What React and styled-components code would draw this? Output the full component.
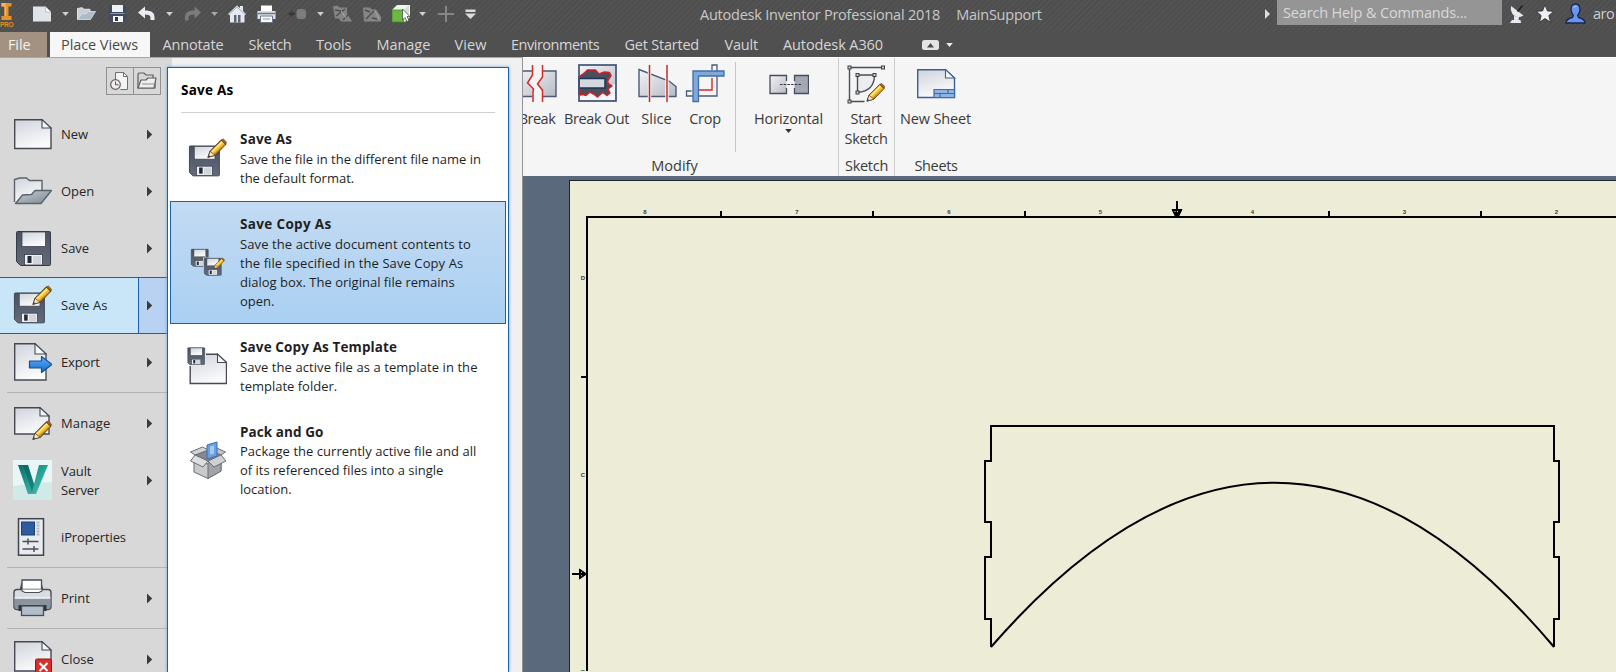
import React from "react";
import styled, { createGlobalStyle, css } from "styled-components";

const Global = createGlobalStyle`
  * { box-sizing: border-box; }
  body {
    margin: 0;
    overflow: hidden;
    background: #edecd7;
    font-family: "Open Sans", "Noto Sans", sans-serif;
  }
`;

/* ---------- layout ---------- */

const Window = styled.div`
  display: flex;
  flex-direction: column;
  width: 1616px;
  height: 672px;
  overflow: hidden;
`;

const TopBar = styled.header`
  flex: none;
  display: flex;
  flex-direction: column;
  height: 57px;
  background: #505050;
  color: #d6d6d6;
  font-size: 14.5px;
`;

const TitleRow = styled.div`
  display: flex;
  height: 32px;
  background: repeating-linear-gradient(135deg, #4e4e4e 0 2px, #535353 2px 4px);
`;

const QuickAccess = styled.div`
  flex: none;
  display: flex;
  align-items: center;
  width: 700px;
  height: 27px;
`;

const QuickSlot = styled.span`
  flex: none;
  display: flex;
  margin-left: ${(p) => p.$gap}px;
`;

const Text = styled.span`
  white-space: nowrap;
  letter-spacing: ${(p) => p.$ls || 0}px;
`;

const TitleText = styled.div`
  display: flex;
  gap: 16px;
  height: 29px;
  line-height: 29px;
  color: #c9c9c9;
`;

const InfoCenter = styled.div`
  display: flex;
  align-items: center;
  width: 351px;
  height: 27px;
  margin-left: auto;
`;

const SearchBox = styled.div`
  flex: none;
  width: 225px;
  height: 25px;
  margin: 0 7px 2px;
  padding-left: 6px;
  line-height: 25px;
  background: #959595;
  color: #d9d9d9;
`;

const UserName = styled.span`
  margin-left: 7px;
  color: #cfcfcf;
  letter-spacing: -0.5px;
`;

const TabRow = styled.nav`
  display: flex;
  height: 25px;
  line-height: 25px;
`;

const Tab = styled.div`
  flex: none;
  width: ${(p) => p.$w}px;
  padding-left: ${(p) => (p.$kind ? 0 : 12.5)}px;
  white-space: nowrap;
  letter-spacing: ${(p) => p.$ls}px;
  ${(p) => p.$kind === "file" && css`
    margin-right: 3px;
    padding-left: 8px;
    background: #a39282;
    color: #f4f1ee;
  `}
  ${(p) => p.$kind === "active" && css`
    padding-left: 11px;
    background: #f7f7f7;
    color: #4b4b4b;
  `}
`;

const RibbonToggle = styled.div`
  display: flex;
  align-items: center;
  gap: 7px;
  margin-left: 38px;
`;

const Body = styled.div`
  flex: 1;
  display: flex;
  min-height: 0;
`;

/* ---------- application menu ---------- */

const AppMenu = styled.aside`
  flex: none;
  display: flex;
  width: 523px;
  border-top: 1px solid #a6a6a6;
  border-right: 1px solid #939393;
  background: linear-gradient(90deg, #d8d8d8 172px, #f0f0f0 172px);
`;

const MenuColumn = styled.div`
  flex: none;
  width: 167px;
  padding-top: 9px;
`;

const DocButtons = styled.div`
  display: flex;
  width: 55px;
  height: 28px;
  margin: 0 0 11px 106px;
  border: 1px solid #909090;
`;

const DocButton = styled.div`
  flex: 1;
  display: flex;
  align-items: center;
  justify-content: center;
  & + & { border-left: 1px solid #909090; }
`;

const MenuRow = styled.div`
  display: flex;
  align-items: center;
  height: 57px;
  padding-left: 12px;
  border: solid transparent;
  border-width: 1px 0;
  font-size: 13px;
  line-height: 19px;
  color: #262626;
  & > svg:first-child { margin-bottom: 2px; }
  ${(p) => p.$active && css`
    border-color: #1c5faf;
    background: linear-gradient(90deg, #c8e6f8 138px, #1c5faf 138px 139px, #b9d2f1 139px);
  `}
`;

const MenuLabel = styled.span`
  width: 76px;
  margin: 0 10px 0 9px;
  white-space: pre-line;
  letter-spacing: ${(p) => p.$ls || 0}px;
`;

const MenuRule = styled.div`
  height: 4px;
  margin-left: 7px;
  background: linear-gradient(transparent 1px, #b2b2b2 1px 2px, transparent 2px);
`;

const Flyout = styled.section`
  flex: none;
  width: 342px;
  margin-top: 9px;
  padding: 0 2px;
  border: 1px solid #1c62a8;
  border-bottom: 0;
  background: #fff;
  box-shadow: 0 0 3px #62a4dd;
`;

const FlyoutTitle = styled.h2`
  height: 45px;
  margin: 0 11px 3px 11px;
  border-bottom: 1px solid #d0d0d0;
  font-size: 13.5px;
  font-weight: 700;
  line-height: 45px;
  letter-spacing: 0.25px;
  color: #000;
`;

const FlyoutItem = styled.div`
  display: flex;
  align-items: center;
  padding: 13px 0 12px 16px;
  border: 1px solid ${(p) => (p.$active ? "#1c62a8" : "transparent")};
  background: ${(p) => (p.$active ? "linear-gradient(#c3daf2, #aad0f2)" : "none")};
  color: #1f1f1f;
  font-size: 13px;
  line-height: 19px;
  & > svg { margin-bottom: 2px; }
`;

const ItemBody = styled.div`
  display: flex;
  flex-direction: column;
  margin-left: 13px;
`;

const ItemTitle = styled.strong`
  margin-bottom: ${(p) => (p.$tight ? 0 : 1)}px;
  font-size: 13.5px;
  letter-spacing: ${(p) => p.$ls}px;
`;

/* ---------- ribbon ---------- */

const Main = styled.main`
  flex: 1;
  display: flex;
  flex-direction: column;
  min-width: 0;
`;

const Ribbon = styled.div`
  flex: none;
  display: flex;
  height: 119px;
  overflow: hidden;
  border-top: 1px solid #fff;
  background: #f5f5f5;
  color: #3a3a3a;
  font-size: 14.5px;
`;

const RibbonGroup = styled.div`
  flex: none;
  display: flex;
  flex-direction: column;
  width: ${(p) => p.$w}px;
  margin-left: ${(p) => p.$shift || 0}px;
  border-right: ${(p) => (p.$last ? 0 : "1px solid #cccccc")};
`;

const GroupTools = styled.div`
  display: flex;
  height: 98px;
  padding-top: 6px;
`;

const GroupName = styled.div`
  height: 20px;
  padding-right: ${(p) => p.$pad || 0}px;
  line-height: 20px;
  text-align: center;
  letter-spacing: ${(p) => p.$ls || 0}px;
`;

const Tool = styled.div`
  flex: none;
  display: flex;
  flex-direction: column;
  align-items: center;
  width: ${(p) => p.$w}px;
  line-height: 20px;
  letter-spacing: ${(p) => p.$ls || 0}px;
  white-space: pre;
  text-align: center;
  & > svg:first-child { margin-bottom: 5px; }
`;

const ToolRule = styled.div`
  flex: none;
  width: 1px;
  height: 90px;
  margin: -2px 2px 0 4px;
  background: #c6c6c6;
`;

const Canvas = styled.div`
  flex: 1;
  padding: 4px 0 0 46px;
  background: #5a697c;
`;

const Sheet = styled.div`
  height: 100%;
  border: solid #20242c;
  border-width: 1px 0 0 1px;
  background: #edecd7;
  svg { display: block; }
`;

/* ---------- shared icon pieces ---------- */

const Defs = styled.svg`
  position: absolute;
`;

const Gradients = () => (
  <Defs width="0" height="0">
    <defs>
      <linearGradient id="paper" x1="0" y1="0" x2="0.4" y2="1">
        <stop offset="0" stopColor="#cfd4dc" /><stop offset="1" stopColor="#fafafa" />
      </linearGradient>
      <linearGradient id="steel" x1="0" y1="0" x2="1" y2="1">
        <stop offset="0" stopColor="#f4f4f5" /><stop offset="1" stopColor="#b5bac5" />
      </linearGradient>
      <linearGradient id="flap" x1="0" y1="0" x2="1" y2="1">
        <stop offset="0" stopColor="#c5ccd3" /><stop offset="1" stopColor="#7f8a94" />
      </linearGradient>
      <linearGradient id="disk" x1="0" y1="0" x2="0" y2="1">
        <stop offset="0" stopColor="#4b515f" /><stop offset="1" stopColor="#636b7a" />
      </linearGradient>
      <linearGradient id="teal" x1="0" y1="0" x2="1" y2="1">
        <stop offset="0" stopColor="#0c6a67" /><stop offset="0.5" stopColor="#27a196" /><stop offset="1" stopColor="#57bfb0" />
      </linearGradient>
      <linearGradient id="arrow" x1="0" y1="0" x2="0" y2="1">
        <stop offset="0" stopColor="#59b4ff" /><stop offset="1" stopColor="#1766c8" />
      </linearGradient>
    </defs>
  </Defs>
);

const Icon = ({ w = 40, h = 40, children }) => (
  <svg width={w} height={h} viewBox={`0 0 ${w} ${h}`} fill="none">{children}</svg>
);

const Caret = ({ fill = "#d0d0d0" }) => (
  <Icon w={7} h={4}><path d="M.2 0h6.600L3.500 4z" fill={fill} /></Icon>
);

const RightMark = () => (
  <Icon w={6} h={11}><path d="M0 .5v10l5.200-5z" fill="#3a3a3a" /></Icon>
);

const Pencil = ({ x = 0, y = 0, k = 1 }) => (
  <g transform={`translate(${x} ${y}) scale(${k})`}>
    <path d="M0 18l2-6L13 1l4.500 4L7 16z" fill="#f3c22f" stroke="#4b3a22" strokeWidth="1" strokeLinejoin="round" />
    <path d="M3.500 13L14 2.500" stroke="#ffe98a" strokeWidth="1.600" />
    <path d="M6 15.300L16.500 5.300" stroke="#c5851d" strokeWidth="1.400" />
    <path d="M13 1l2-1 3 3-.5 2z" fill="#a5692b" stroke="#6d4822" strokeWidth=".8" />
    <path d="M0 18l2-6 5 4z" fill="#f5e3c4" stroke="#4b3a22" strokeWidth=".7" />
    <path d="M0 18l.8-2.200 1.500 1.300z" fill="#333" />
  </g>
);

const Disk = ({ x = 0, y = 0, k = 1 }) => (
  <g transform={`translate(${x} ${y}) scale(${k})`}>
    <path d="M.5 1.500q0-1 1-1h32q1 0 1 1v32q0 1-1 1H4.500l-4-4z" fill="url(#disk)" stroke="#353b48" />
    <rect x="6" y="1" width="23.500" height="14.500" fill="url(#paper)" stroke="#3e4553" strokeWidth=".8" />
    <rect x="8.500" y="23.500" width="18" height="10.500" fill="#eef0f2" stroke="#333b47" strokeWidth=".8" />
    <rect x="11.500" y="25" width="4" height="7" fill="#222a38" />
    <rect x="17" y="25" width="8" height="8" fill="#d2d6dc" />
  </g>
);

const Page = ({ x, y, w, h, c = "#454a55", fold = 9 }) => (
  <g transform={`translate(${x} ${y})`}>
    <path d={`M.7.7H${w - fold}L${w} ${fold}V${h}H.7z`} fill="url(#paper)" stroke={c} strokeWidth="1.400" />
    <path d={`M${w - fold} .7V${fold}H${w}z`} fill="#f7f8fa" stroke={c} strokeWidth="1.100" />
  </g>
);

/* ---------- quick access icons ---------- */

const LogoText = styled.text`
  font: 700 6.5px "Liberation Sans", sans-serif;
  fill: #e38d23;
`;

const quickItems = [
  [0, <Icon w={14} h={27}><path d="M1.500 3h10v3.500h-3v9.500h3v4h-10v-4h3V6.500h-3z" fill="#e8922b" /><path d="M1.500 3h4v3.500h-4zM4.500 6.500h1.700V16H4.500z" fill="#f7b65b" /><LogoText x="0" y="27" textLength="13.500">PRO</LogoText></Icon>],
  [19, <Icon w={18} h={16}><path d="M0 .5h12.500L18 6v9.500H0z" fill="#dfe4ea" /><path d="M12.500.5V6H18z" fill="#fff" stroke="#9aa2ac" strokeWidth=".6" /></Icon>],
  [11, <Caret />],
  [8, <Icon w={19} h={13}><path d="M.5 12V1.500L5 .7l2 1.600h6V5" fill="#c6ced8" stroke="#dde3ea" /><path d="M.5 12.500L4.500 7l5-.5 2-2h7L13.500 12.500z" fill="#aebcca" stroke="#dde3ea" strokeWidth=".8" /></Icon>],
  [13, <Icon w={17} h={17}><path d="M0 0h17v17H1.500L0 15.500z" fill="#3e4b60" /><path d="M3 0h11v7H3z" fill="#eef1f5" /><path d="M1.500 8.500h14" stroke="#8d99ab" /><path d="M4 11h10v6H4z" fill="#f4f6f8" /><path d="M6 12h3v4H6z" fill="#2d3748" /></Icon>],
  [12, <Icon w={18} h={16}><path d="M0 6.500L7 .5v4c6 0 9.500 2 9.500 6.500V14h-4v-2.500c0-2-2-3-5.500-3v4z" fill="#e9edf2" /></Icon>],
  [10, <Caret />],
  [11, <Icon w={17} h={16}><path d="M17 6.500L10.500.5v4C4.500 4.500 1 6.500 1 11v3.500h3.500V11.500c0-2 2-3 6-3v4z" fill="#7b7b7b" /></Icon>],
  [10, <Caret fill="#a9a9a9" />],
  [10, <Icon w={18} h={18}><path d="M0 9l9-8.500L12 3V1h3v5l3 3-1.500 1.500V17.500H2V10.500z" fill="#e4e8ef" /><path d="M1 9.500L9 2l8 7.500" stroke="#a0a8b4" strokeWidth=".9" /><path d="M6 10h2.500v7.500H6zM10 10h2.500v7.500H10z" fill="#5d6673" /></Icon>],
  [11, <Icon w={19} h={18}><path d="M4 .5h11V6H4z" fill="#fff" /><path d="M.5 6h18v8H.5z" fill="#dce1e8" /><path d="M1 8.500h17" stroke="#6c7786" strokeWidth="1.500" /><path d="M3.500 11h12v6.500h-12z" fill="#f8f9fb" stroke="#6c7786" /><path d="M6 14h7" stroke="#8f98a6" /></Icon>],
  [12, <Icon w={18} h={12}><path d="M0 6l4.500-3.500V5H7v2H4.500v2.500z" fill="#383838" /><rect x="8.500" y="1" width="9.500" height="10" rx="3" fill="#7c7c7c" /></Icon>],
  [11, <Caret />],
  [9, <Icon w={19} h={17}><path d="M0 1.500l4-1 3 2h7v6l5 8H8l-2-3H2z" fill="#858585" /><path d="M2 5l6 1M3 11l9-7M10 15l5-5" stroke="#4d4d4d" strokeWidth="1.400" /><path d="M8 6l5 7" stroke="#aaa" /></Icon>],
  [11, <Icon w={18} h={16}><path d="M0 1.500h7l2 2h4l5 7v5H1z" fill="#858585" /><path d="M2 4l5 2M3 13l8-8M9 12l5 1" stroke="#4d4d4d" strokeWidth="1.400" /><path d="M12 5l4 8" stroke="#aaa" /></Icon>],
  [11, <Icon w={19} h={19}><path d="M0 6l5-5h13v12l-5 5H0z" fill="#eef6ec" /><path d="M0 6h12v12H0z" fill="#6cb644" stroke="#3f8a25" strokeWidth=".8" /><path d="M12 6l5-5v12l-5 5z" fill="#d3ddd2" /><path d="M10.500 5v11l2.500-2.500 2 4 2-1-2-4h3z" fill="#fff" stroke="#46504a" strokeWidth=".8" /></Icon>],
  [8, <Caret />],
  [11, <Icon w={18} h={18}><path d="M9 1v16M1 9h16" stroke="#868686" strokeWidth="2" /></Icon>],
  [10, <Icon w={11} h={10}><path d="M.5.5h10V3H.5zM0 4.500h11L5.500 10z" fill="#dadada" /></Icon>],
];

const tabs = [
  ["File", 47, -0.11, "file"], ["Place Views", 100, -0.08, "active"], ["Annotate", 86, -0.15],
  ["Sketch", 67.5, -0.3], ["Tools", 60.5, -0.15], ["Manage", 78, -0.05], ["View", 56.5, 0.1],
  ["Environments", 113.5, -0.49], ["Get Started", 100, -0.22], ["Vault", 58.5, -0.2],
  ["Autodesk A360", 113, -0.1],
];

/* ---------- menu icons ---------- */

const NewIcon = () => <Icon><Page x={2} y={5} w={37} h={29.500} /></Icon>;
const OpenIcon = () => (
  <Icon>
    <path d="M2.500 31V8.500l5-1.500h7l3 2.500h12.500V20" fill="url(#paper)" stroke="#5b636e" strokeWidth="1.400" />
    <path d="M3.500 32.500L10.500 24l9-.5 3.500-4h16.500L29 32.500z" fill="url(#flap)" stroke="#5b636e" strokeWidth="1.400" strokeLinejoin="round" />
  </Icon>
);
const SaveIcon = () => <Icon><Disk x={4} y={3} /></Icon>;
const SaveAsIcon = () => <Icon><Disk x={2} y={7.500} k={0.880} /><Pencil x={21} y={1} k={1.020} /></Icon>;
const ExportIcon = () => (
  <Icon>
    <Page x={2} y={1} w={32} h={37} fold={11} />
    <path d="M17.500 19h12v-4.500l10.500 8-10.500 8V26h-12z" fill="url(#arrow)" stroke="#174f94" strokeWidth="1.200" strokeLinejoin="round" />
  </Icon>
);
const ManageIcon = () => <Icon><Page x={2} y={4} w={35} h={27} /><Pencil x={21} y={18} k={1.020} /></Icon>;
const VaultIcon = () => (
  <Icon>
    <rect x="1" y="0" width="40" height="40" fill="#e8f6f6" />
    <path d="M1 26L40 22V40H1z" fill="#cfeae7" />
    <path d="M6 5h10l6 19 5-19h9L24 34h-8z" fill="url(#teal)" />
    <path d="M16 5l6 19-2 8-9-27z" fill="#0b5c5b" opacity=".55" />
  </Icon>
);
const PropsIcon = () => (
  <Icon>
    <rect x="6.500" y="1.700" width="25" height="36.500" fill="#e9ebee" stroke="#3d444f" strokeWidth="1.500" />
    <rect x="9.500" y="5" width="13" height="13" fill="#2f5c9e" stroke="#1d3e70" />
    <path d="M26 4.500v14" stroke="#b3b8be" strokeWidth="3" strokeDasharray="2 1" />
    <path d="M10.500 24.500h16M10.500 32h16M16 21.500v6M22 29v6" stroke="#4a515c" strokeWidth="1.500" />
  </Icon>
);
const PrintIcon = () => (
  <Icon>
    <path d="M7.500 12l2-7.500h20l2 7.500" fill="#454c57" />
    <path d="M10 13V2h19.500v11" fill="#fff" stroke="#474e58" strokeWidth="1.300" />
    <rect x="2" y="11.500" width="37" height="20" rx="3" fill="#d9dde2" stroke="#474e58" strokeWidth="1.400" />
    <path d="M10 11.500v1.500l3 1.500h14l3-1.500v-1.500" fill="#fff" stroke="#474e58" strokeWidth="1.200" />
    <path d="M2.700 20.500h35.600v8q0 2.500-3 2.500h-29.600q-3 0-3-2.500z" fill="#8b939d" />
    <path d="M2.500 20h36" stroke="#fff" />
    <rect x="6.500" y="27" width="28" height="6" fill="#30363f" />
    <rect x="9.500" y="28" width="22" height="9.500" fill="#b1bdc8" stroke="#474e58" strokeWidth="1.300" />
  </Icon>
);
const CloseIcon = () => (
  <Icon>
    <Page x={2} y={2} w={37} h={30} />
    <rect x="23.500" y="20" width="16" height="16" rx="1.500" fill="#d9302c" stroke="#8e1713" />
    <path d="M27.500 24l8 8M35.500 24l-8 8" stroke="#fff" strokeWidth="2" />
  </Icon>
);

const menuItems = [
  { label: "New", icon: <NewIcon />, arrow: true },
  { label: "Open", icon: <OpenIcon />, arrow: true },
  { label: "Save", icon: <SaveIcon />, arrow: true },
  { label: "Save As", icon: <SaveAsIcon />, arrow: true, active: true, ls: 0.08 },
  { label: "Export", icon: <ExportIcon />, arrow: true, ls: -0.15 },
  { rule: true },
  { label: "Manage", icon: <ManageIcon />, arrow: true, ls: 0.17 },
  { label: "Vault\nServer", icon: <VaultIcon />, arrow: true, ls: -0.1 },
  { label: "iProperties", icon: <PropsIcon />, ls: -0.12 },
  { rule: true },
  { label: "Print", icon: <PrintIcon />, arrow: true, ls: -0.05 },
  { rule: true },
  { label: "Close", icon: <CloseIcon />, arrow: true },
];

/* ---------- flyout icons ---------- */

const CopyIcon = () => (
  <Icon>
    <Disk x={4} y={7} k={0.5} />
    <rect x="16" y="15.500" width="18" height="17" fill="#c0d8f1" />
    <Disk x={17} y={16} k={0.5} />
    <Pencil x={27} y={16} k={0.58} />
  </Icon>
);
const TemplateIcon = () => (
  <Icon><Page x={2.500} y={7.500} w={37} h={30} /><rect x="0" y="0" width="19" height="20" fill="#fff" /><Disk x={0.500} y={1.500} k={0.500} /></Icon>
);
const PackIcon = () => (
  <Icon>
    <g stroke="#6b6e73" strokeWidth="1" strokeLinejoin="round" transform="translate(1 1)">
      <path d="M7 14l13-5 13 5-13 6z" fill="#85888d" />
      <path d="M7 14L2.500 11l12-5 6 3z" fill="#d3d4d6" /><path d="M33 14l4.500-3-11-5-6 3z" fill="#c3c5c8" />
      <path d="M19 4l10-3v14L19 18z" fill="#68a0e0" stroke="#3a70b5" /><path d="M22 5.500l4-1v8l-4 1.200z" fill="#a9caef" stroke="none" />
      <path d="M6 20l14 3 13-3v10l-13 7.500L6 31z" fill="#c9cacc" /><path d="M20 22v15.500L33 30V18z" fill="#a0a3a7" />
      <path d="M7 14l13 6-5 6L2.500 20z" fill="#dedfe1" /><path d="M33 14l-13 6 6 6 12-6z" fill="#cfd0d3" />
    </g>
  </Icon>
);

const flyoutItems = [
  { title: "Save As", ls: 0.2, icon: <SaveAsIcon />, lines: [["Save the file in the different file name in", 0], ["the default format.", 0]] },
  { title: "Save Copy As", ls: 0.34, icon: <CopyIcon />, active: true, lines: [["Save the active document contents to", 0.1], ["the file specified in the Save Copy As", 0.09], ["dialog box. The original file remains", 0], ["open.", 0]] },
  { title: "Save Copy As Template", ls: 0.12, icon: <TemplateIcon />, lines: [["Save the active file as a template in the", 0.07], ["template folder.", 0]] },
  { title: "Pack and Go", ls: 0.08, tight: true, icon: <PackIcon />, lines: [["Package the currently active file and all", 0.04], ["of its referenced files into a single", 0], ["location.", 0]] },
];

/* ---------- ribbon icons ---------- */

const BreakIcon = () => (
  <Icon>
    <path d="M0 7h39v25.500H0z" fill="url(#steel)" stroke="#4c5a78" strokeWidth="1.400" />
    <path d="M15.500 2v8l-5 7 6 8-1 3v10h10V28l-5-7 5-6V2z" fill="#f5f5f5" />
    <path d="M15.500 1v10l-5 8 6 6-.5 3v10M25.500 1v12l-5 7 5 6v12" stroke="#d42a2a" strokeWidth="1.500" />
  </Icon>
);
const BreakOutIcon = () => (
  <Icon>
    <rect x="2" y="1" width="37" height="36" fill="url(#steel)" stroke="#425374" strokeWidth="1.700" />
    <path d="M3 30v6h35V20z" fill="#f4f5f7" />
    <path d="M3 12L8 8.500 10.500 6h8l3.500 4 5.500-2 5 .5 1.500 3-3.500 5.500 1 3 3.500 2-4 3 2 4-3 2.500-4.500-3-5 4.500-4-3-3.500-2-4 3.500-3-1L3 31z" fill="#4b4f59" stroke="#cf2129" strokeWidth="1.500" strokeLinejoin="round" />
    <path d="M2 14.500h26V24H2z" fill="#d3d7de" stroke="#1f3560" strokeWidth="1.500" />
    <path d="M2 12v19" stroke="#425374" strokeWidth="1.700" />
  </Icon>
);
const SliceIcon = () => (
  <Icon>
    <path d="M2 5.500L32 17l7 5.500v10H2z" fill="url(#steel)" stroke="#4c5a78" strokeWidth="1.400" />
    <path d="M12.500 1v37M30 1v37" stroke="#f5f5f5" strokeWidth="3.500" /><path d="M12.500 1v37M30 1v37" stroke="#c92b2b" strokeWidth="1.500" />
  </Icon>
);
const CropIcon = () => (
  <Icon>
    <path d="M27 6V1h5v31H1.500V27h5" stroke="#4c5a78" strokeWidth="1.300" />
    <path d="M14 26h13V14" stroke="#d42a2a" strokeWidth="1.400" />
    <path d="M8 7h31v5H13.500v25.500H8z" fill="#81a8db" stroke="#416fa9" strokeWidth="1.300" />
  </Icon>
);
const HorizontalIcon = () => (
  <Icon>
    <path d="M17.500 17v-5.500H1V29.500h16.500V24" fill="url(#steel)" stroke="#484e59" strokeWidth="1.300" />
    <path d="M25.500 17v-5.500H39.500V29.500H25.500V24" fill="#a3a8b4" stroke="#484e59" strokeWidth="1.300" />
    <path d="M11 20.500h21" stroke="#2f353f" strokeDasharray="2.500 1.200" />
  </Icon>
);
const StartSketchIcon = () => (
  <Icon>
    <path d="M3.500 3.500h34M3.500 3.500v34h15" stroke="#4a4e56" strokeWidth="1.400" />
    <path d="M11.500 11h17q0 16-17 17.500z" fill="#eceded" stroke="#4a4e56" strokeWidth="1.400" />
    {[[3.500, 3.500], [37, 3.500], [3.500, 37.500], [11.500, 11], [28.500, 11], [11.500, 28.500]].map(([x, y]) => (
      <rect key={`${x}-${y}`} x={x - 1.500} y={y - 1.500} width="3" height="3" fill="#ccc" stroke="#3c4047" />
    ))}
    <Pencil x={21} y={19.500} k={0.980} />
  </Icon>
);
const NewSheetIcon = () => (
  <Icon>
    <Page x={1} y={5} w={37.500} h={28.500} c="#3e5d91" />
    <path d="M18 25.500h20.500v8H18zM18 29.500h20.500M32 25.500v4M24 29.500v4" fill="#8db4e4" stroke="#3d6cab" strokeWidth="1.200" />
  </Icon>
);

/* ---------- drawing sheet ---------- */

const ZoneLabel = styled.text`
  font: 700 6px "Liberation Sans", sans-serif;
  fill: #3a3a32;
  text-anchor: middle;
`;

const topZones = [[645, "8"], [797, "7"], [949, "6"], [1100.5, "5"], [1252.5, "4"], [1404.5, "3"], [1556.5, "2"]];
const sideZones = [[278.500, "D"], [475.500, "C"], [672, "B"]];

const Drawing = () => (
  <svg width="1046" height="490" viewBox="570 181 1046 490" fill="none" stroke="#000">
    <g strokeWidth="2" shapeRendering="crispEdges">
      <path d="M1617 217H587V672" />
      <path d="M721 211v6M873 211v6M1025 211v6M1329 211v6M1481 211v6M581 377h6" />
      <path d="M1177 201v15M572 574h14" />
      <path d="M991 647V619H985V557H991V522H985V461H991V426H1554V461H1559V522H1554V557H1559V619H1554V647" />
    </g>
    <path d="M1172 209.500h10l-3.500 7h-3zM579.500 569v10l7-5z" fill="#000" strokeWidth="1" />
    <path d="M1174.500 211.500h5M581 572l2 1M581 576l2-1" stroke="#edecd7" strokeWidth="1" strokeDasharray="1 1.500" />
    <path d="M991 647Q1277 318.500 1554 647" strokeWidth="2" />
    <g stroke="none">
      {topZones.map(([x, n]) => <ZoneLabel key={n} x={x} y="214">{n}</ZoneLabel>)}
      {sideZones.map(([y, n]) => <ZoneLabel key={n} x="583" y={y + 1.500}>{n}</ZoneLabel>)}
    </g>
  </svg>
);

export default function App() {
  return (
    <Window>
      <Global />
      <Gradients />
      <TopBar>
        <TitleRow>
          <QuickAccess>
            {quickItems.map(([gap, icon], i) => <QuickSlot key={i} $gap={gap}>{icon}</QuickSlot>)}
          </QuickAccess>
          <TitleText>
            <Text $ls={-0.23}>Autodesk Inventor Professional 2018</Text>
            <Text $ls={-0.23}>MainSupport</Text>
          </TitleText>
          <InfoCenter>
            <Icon w={5} h={10}><path d="M0 0v10l5-5z" fill="#dcdcdc" /></Icon>
            <SearchBox><Text $ls={-0.16}>Search Help &amp; Commands...</Text></SearchBox>
            <Icon w={16} h={20}>
              <path d="M2 2Q1 8 5 11.500q4 3 9.500 0z" fill="#e6e9ee" /><path d="M8.500 7.500l5-6" stroke="#222" strokeWidth="1.800" />
              <path d="M5 12l5 1-.5 3h2l.5 3H1l2-3h2z" fill="#e6e9ee" />
            </Icon>
            <QuickSlot $gap={11}>
              <Icon w={18} h={19}><path d="M9 .8l2.400 6.200 6.300.3-4.900 4.200 1.700 6.700L9 14.500l-5.500 3.700 1.700-6.700L.3 7.300l6.300-.3z" fill="#edf0f4" stroke="#2e2e2e" strokeWidth=".8" /></Icon>
            </QuickSlot>
            <QuickSlot $gap={11}>
              <Icon w={21} h={21}><path d="M1 20q0-4 6.500-5.500l.8-2Q6 9.500 6 6.500 6 1 10.500 1T15 6.500q0 3-2.300 6l.8 2Q20 16 20 20z" fill="#6a95ea" stroke="#142954" strokeWidth="1.300" /><path d="M8.500 5q1-2 3-1.500" stroke="#b5cdfa" /></Icon>
            </QuickSlot>
            <UserName>aro</UserName>
          </InfoCenter>
        </TitleRow>
        <TabRow>
          {tabs.map(([name, w, ls, kind]) => <Tab key={name} $w={w} $ls={ls} $kind={kind}>{name}</Tab>)}
          <RibbonToggle>
            <Icon w={17} h={10}><rect width="17" height="10" rx="2.500" fill="#e3e3e3" /><path d="M5 7.500h7L8.500 3z" fill="#4a4a4a" /></Icon>
            <Caret fill="#ededed" />
          </RibbonToggle>
        </TabRow>
      </TopBar>

      <Body>
        <AppMenu>
          <MenuColumn>
            <DocButtons>
              <DocButton>
                <Icon w={20} h={20}><path d="M5.500 8V1.500h8l4 4v13h-7" fill="#f3f3f3" stroke="#6f6f6f" /><path d="M13.500 1.500v4h4" stroke="#6f6f6f" /><circle cx="5.500" cy="13.500" r="4.800" fill="#eee" stroke="#6b5b5b" strokeWidth="1.200" /><path d="M5.500 10.500v3.300h3" stroke="#6b4b4b" /></Icon>
              </DocButton>
              <DocButton>
                <Icon w={20} h={18}><path d="M1 16V2l1-1h5l2 2h7v3l2 1v9z" fill="#d6d6d6" stroke="#5d5d5d" strokeWidth="1.200" /><path d="M1 16l3-8h5l2-2h8l-2 10z" fill="#efefef" stroke="#5d5d5d" strokeWidth="1.200" strokeLinejoin="round" /><path d="M5 12h13" stroke="#8b8b8b" /></Icon>
              </DocButton>
            </DocButtons>
            {menuItems.map((item, i) =>
              item.rule ? <MenuRule key={i} /> : (
                <MenuRow key={i} $active={item.active}>
                  {item.icon}
                  <MenuLabel $ls={item.ls}>{item.label}</MenuLabel>
                  {item.arrow && <RightMark />}
                </MenuRow>
              )
            )}
          </MenuColumn>
          <Flyout>
            <FlyoutTitle>Save As</FlyoutTitle>
            {flyoutItems.map((item) => (
              <FlyoutItem key={item.title} $active={item.active}>
                {item.icon}
                <ItemBody>
                  <ItemTitle $ls={item.ls} $tight={item.tight}>{item.title}</ItemTitle>
                  {item.lines.map(([line, ls]) => <Text key={line} $ls={ls}>{line}</Text>)}
                </ItemBody>
              </FlyoutItem>
            ))}
          </Flyout>
        </AppMenu>

        <Main>
          <Ribbon>
            <RibbonGroup $w={324} $shift={-8}>
              <GroupTools>
                <Tool $w={44} $ls={-0.5}><BreakIcon />Break</Tool>
                <Tool $w={75} $ls={-0.36}><BreakOutIcon />Break Out</Tool>
                <Tool $w={45}><SliceIcon />Slice</Tool>
                <Tool $w={52} $ls={-0.25}><CropIcon />Crop</Tool>
                <ToolRule />
                <Tool $w={101} $ls={-0.13}><HorizontalIcon />Horizontal<Caret fill="#333" /></Tool>
              </GroupTools>
              <GroupName $pad={4}>Modify</GroupName>
            </RibbonGroup>
            <RibbonGroup $w={56}>
              <GroupTools><Tool $w={54} $ls={-0.28}><StartSketchIcon />{"Start\nSketch"}</Tool></GroupTools>
              <GroupName $ls={-0.29}>Sketch</GroupName>
            </RibbonGroup>
            <RibbonGroup $w={82} $last>
              <GroupTools><Tool $w={81} $ls={-0.15}><NewSheetIcon />New Sheet</Tool></GroupTools>
              <GroupName $ls={-0.37}>Sheets</GroupName>
            </RibbonGroup>
          </Ribbon>
          <Canvas>
            <Sheet><Drawing /></Sheet>
          </Canvas>
        </Main>
      </Body>
    </Window>
  );
}
